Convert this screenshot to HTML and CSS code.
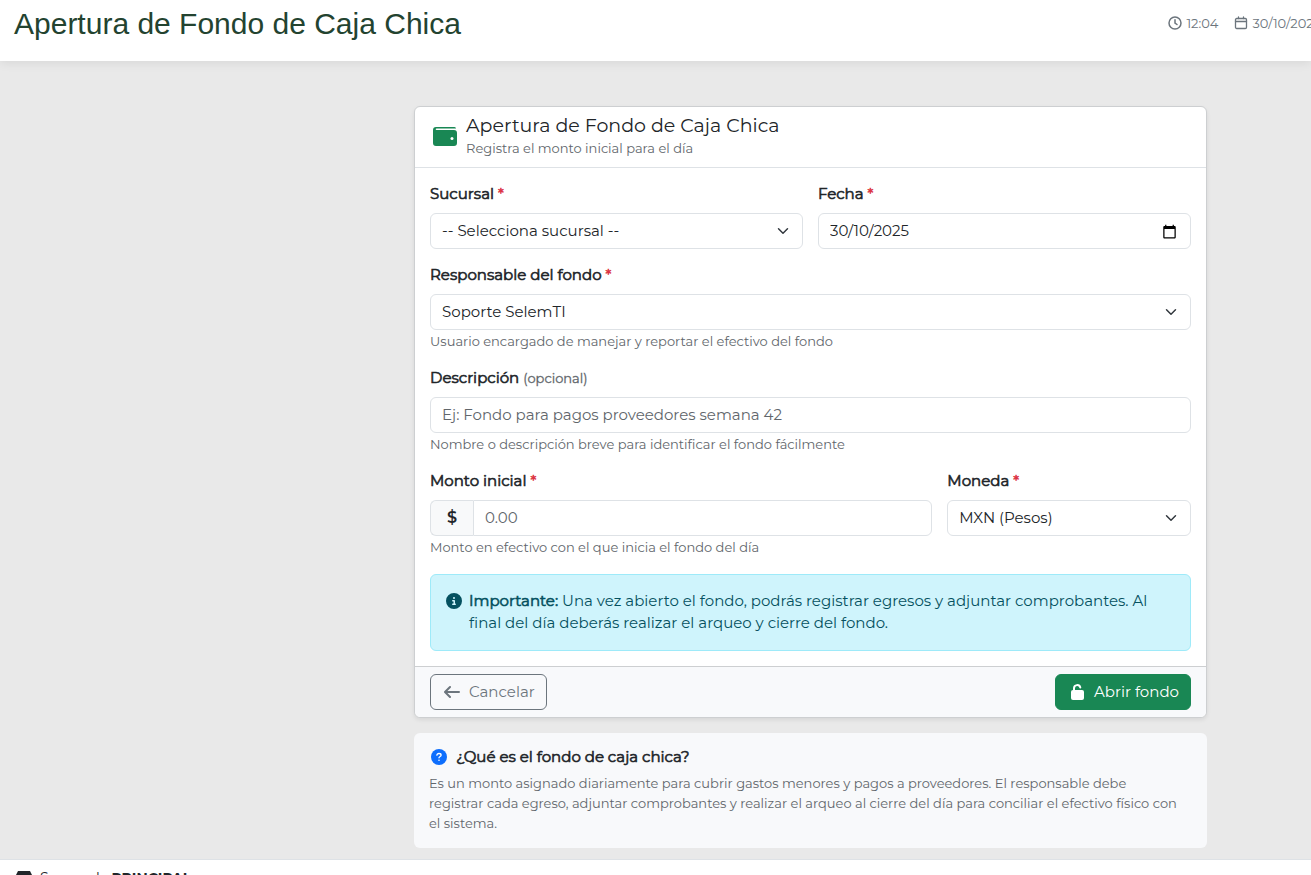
FILE: index.html
```html
<!DOCTYPE html>
<html lang="es">
<head>
<meta charset="utf-8">
<title>Apertura de Fondo de Caja Chica</title>
<link rel="stylesheet" href="styles.css">
</head>
<body>
<header class="topbar">
  <h1 class="topbar-title">Apertura de Fondo de Caja Chica</h1>
  <div class="topbar-meta">
    <span class="meta-item">
      <svg class="meta-icon" viewBox="0 0 14 14" fill="none" stroke="currentColor" stroke-linecap="round" aria-hidden="true"><circle cx="7" cy="7" r="6" stroke-width="1.500"/><path d="M7 3.800V7l2 1.500" stroke-width="1.500"/></svg>
      12:04</span>
    <span class="meta-item">
      <svg class="meta-icon" viewBox="0 0 14 14" fill="none" stroke="currentColor" stroke-linecap="round" aria-hidden="true"><rect x="1.500" y="2.500" width="11" height="10" rx="1.200" stroke-width="1.300"/><path d="M1.500 5.500h11M4.500 1v1.500M9.500 1v1.500" stroke-width="1.300"/></svg>
      30/10/2025</span>
  </div>
</header>

<main class="page">
  <div class="column">
    <form class="card">
      <div class="card-header">
        <svg class="wallet" viewBox="0 0 24 20" aria-hidden="true"><path d="M3 0h18.500q1.500 0 1.500 1.500H3.500a.8.8 0 0 0 0 1.600H21a3 3 0 0 1 3 3V16a3 3 0 0 1-3 3H3a3 3 0 0 1-3-3V3a3 3 0 0 1 3-3z" fill="currentColor"/><circle cx="19" cy="11.500" r="1.500" fill="#fff"/></svg>
        <div>
          <h2 class="card-title">Apertura de Fondo de Caja Chica</h2>
          <p class="card-subtitle">Registra el monto inicial para el día</p>
        </div>
      </div>

      <div class="card-body">
        <div class="field half">
          <label class="label" for="sucursal">Sucursal <span class="required">*</span></label>
          <select class="control select" id="sucursal"><option>-- Selecciona sucursal --</option></select>
        </div>
        <div class="field half">
          <label class="label" for="fecha">Fecha <span class="required">*</span></label>
          <div class="control date-control">
            <input class="bare-input" id="fecha" type="text" value="30/10/2025">
            <svg class="date-icon" viewBox="0 0 24 24" aria-hidden="true"><path d="M20 3h-1V1h-2v2H7V1H5v2H4c-1.100 0-2 .9-2 2v16c0 1.100.9 2 2 2h16c1.100 0 2-.9 2-2V5c0-1.100-.9-2-2-2zm0 18H4V8h16v13z"/></svg>
          </div>
        </div>
        <div class="field full">
          <label class="label" for="responsable">Responsable del fondo <span class="required">*</span></label>
          <select class="control select" id="responsable"><option>Soporte SelemTI</option></select>
          <p class="hint">Usuario encargado de manejar y reportar el efectivo del fondo</p>
        </div>
        <div class="field full">
          <label class="label" for="descripcion">Descripción <span class="optional">(opcional)</span></label>
          <input class="control text-input" id="descripcion" type="text" placeholder="Ej: Fondo para pagos proveedores semana 42">
          <p class="hint">Nombre o descripción breve para identificar el fondo fácilmente</p>
        </div>
        <div class="field amount">
          <label class="label" for="monto">Monto inicial <span class="required">*</span></label>
          <div class="input-group">
            <span class="prefix">$</span>
            <input class="control text-input" id="monto" type="text" placeholder="0.00">
          </div>
          <p class="hint">Monto en efectivo con el que inicia el fondo del día</p>
        </div>
        <div class="field currency">
          <label class="label" for="moneda">Moneda <span class="required">*</span></label>
          <select class="control select" id="moneda"><option>MXN (Pesos)</option></select>
        </div>
        <div class="alert full">
          <svg class="alert-icon" viewBox="0 0 512 512" fill="currentColor" aria-hidden="true"><path d="M256 512A256 256 0 1 0 256 0a256 256 0 1 0 0 512zM216 336h24v-64h-24c-13.300 0-24-10.700-24-24s10.700-24 24-24h48c13.300 0 24 10.700 24 24v88h8c13.300 0 24 10.700 24 24s-10.700 24-24 24h-80c-13.300 0-24-10.700-24-24s10.700-24 24-24zm40-208a32 32 0 1 1 0 64 32 32 0 1 1 0-64z"/></svg>
          <p class="alert-text"><strong>Importante:</strong> Una vez abierto el fondo, podrás registrar egresos y adjuntar comprobantes. Al final del día deberás realizar el arqueo y cierre del fondo.</p>
        </div>
      </div>

      <div class="card-footer">
        <button class="btn btn-outline" type="button">
          <svg class="arrow" viewBox="0 0 16 16" fill="none" stroke="currentColor" stroke-width="2" stroke-linecap="round" stroke-linejoin="round" aria-hidden="true"><path d="M15 8H1.500M6 3 1 8l5 5"/></svg>
          Cancelar</button>
        <button class="btn btn-primary" type="submit">
          <svg class="lock" viewBox="0 0 13 16" aria-hidden="true"><path d="M3 7V4.300a3.200 3.200 0 0 1 6.300-.8" fill="none" stroke="currentColor" stroke-width="2" stroke-linecap="round"/><rect y="6" width="13" height="10" rx="2" fill="currentColor"/></svg>
          Abrir fondo</button>
      </div>
    </form>

    <section class="help">
      <h3 class="help-title">
        <svg class="help-icon" viewBox="0 0 16 16" aria-hidden="true"><circle cx="8" cy="8" r="8" fill="#0d6efd"/><path d="M5.900 6.200c0-1.100.8-1.700 2.100-1.700s2.100.7 2.100 1.700c0 1.300-2.100 1.300-2.100 2.600" fill="none" stroke="#fff" stroke-width="1.300" stroke-linecap="round"/><circle cx="8" cy="11.300" r=".8" fill="#fff"/></svg>
        ¿Qué es el fondo de caja chica?</h3>
      <p class="help-text">Es un monto asignado diariamente para cubrir gastos menores y pagos a proveedores. El responsable debe registrar cada egreso, adjuntar comprobantes y realizar el arqueo al cierre del día para conciliar el efectivo físico con el sistema.</p>
    </section>
  </div>
</main>

<footer class="statusbar">
  <svg class="store" viewBox="0 0 16 14" fill="currentColor" aria-hidden="true"><path d="M2 0h12l2 4c0 2-2 3-3 2v8H3V6C2 7 0 6 0 4z"/></svg>
  <span>Sucursal: <strong class="branch">PRINCIPAL</strong></span>
</footer>
</body>
</html>
```
FILE: styles.css
```css
* {
  box-sizing: border-box;
}

body {
  margin: 0;
  height: 100vh;
  overflow: hidden;
  background: #e9e9e9;
  color: #212529;
  font: 400 15px/22px Montserrat, Inter, sans-serif;
}

h1, h2, h3, p {
  margin: 0;
}

svg {
  flex: none;
}

.topbar {
  display: flex;
  justify-content: space-between;
  align-items: flex-start;
  height: 61px;
  padding: 5px 0 0 14px;
  background: #fff;
  box-shadow: 0 2px 10px rgba(0, 0, 0, 0.08);
}

.topbar-title {
  font: 400 30px/38px "Liberation Sans", Arial, sans-serif;
  color: #234330;
}

.topbar-meta {
  display: flex;
  gap: 16px;
  margin-right: -10px;
  padding-top: 8px;
  font-size: 13px;
  line-height: 20px;
  color: #6c757d;
  white-space: nowrap;
}

.meta-item {
  display: flex;
  align-items: center;
  gap: 4px;
}

.meta-icon {
  width: 14px;
  height: 14px;
}

.page {
  display: grid;
  grid-template-columns: 414fr 793fr 104fr;
  padding: 45px 0 11px;
}

.column {
  grid-column: 2;
  display: grid;
  gap: 15px;
  min-width: 0;
}

.card {
  margin: 0;
  background: #fff;
  border: 1px solid #cdcfd1;
  border-radius: 6px;
  box-shadow: 0 2px 4px rgba(0, 0, 0, 0.08);
}

.card-header {
  display: flex;
  align-items: center;
  gap: 9px;
  padding: 8px 18px;
  border-bottom: 1px solid #dee2e6;
}

.wallet {
  width: 24px;
  height: 20px;
  color: #198754;
}

.card-title {
  font-size: 19px;
  line-height: 22px;
  font-weight: 400;
}

.card-subtitle {
  line-height: 22px;
}

.card-subtitle,
.hint,
.help-text {
  font-size: 13px;
  color: #61666b;
}

.card-body {
  display: grid;
  grid-template-columns: repeat(12, minmax(0, 1fr));
  gap: 15px;
  padding: 15px;
}

.half {
  grid-column: span 6;
}

.full {
  grid-column: span 12;
}

.amount {
  grid-column: span 8;
}

.currency {
  grid-column: span 4;
}

.label {
  display: block;
  margin-bottom: 8px;
}

.label,
.help-title,
.alert strong {
  font-weight: 400;
  -webkit-text-stroke: 0.6px;
}

.required {
  color: #dc3545;
}

.optional {
  font-size: 13px;
  color: #61666b;
  -webkit-text-stroke: 0.3px;
}

.control {
  display: block;
  width: 100%;
  height: 36px;
  margin: 0;
  padding: 0 11px;
  border: 1px solid #dee2e6;
  border-radius: 6px;
  background: #fff;
  color: #212529;
  font: inherit;
}

.text-input {
  padding-bottom: 2px;
}

.control::placeholder {
  color: #61666b;
  opacity: 1;
}

.select {
  appearance: none;
  background: #fff url("data:image/svg+xml,%3Csvg xmlns='http://www.w3.org/2000/svg' viewBox='0 0 16 16'%3E%3Cpath fill='none' stroke='%23343a40' stroke-linecap='round' stroke-linejoin='round' stroke-width='2' d='m2 5 6 6 6-6'/%3E%3C/svg%3E") no-repeat right 13px center / 12px 12px;
}

.date-control {
  display: flex;
  align-items: center;
  padding-right: 13px;
}

.bare-input {
  flex: 1;
  min-width: 0;
  padding: 0;
  border: 0;
  background: none;
  color: inherit;
  font: inherit;
}

.date-icon {
  width: 15px;
  height: 15px;
}

.hint {
  margin: 1px 0;
  line-height: 20px;
}

.input-group {
  display: flex;
}

.prefix {
  display: flex;
  align-items: center;
  justify-content: center;
  width: 43px;
  border: 1px solid #dee2e6;
  border-right: 0;
  border-radius: 6px 0 0 6px;
  background: #f8f9fa;
  font-size: 16px;
  font-weight: 600;
}

.input-group .control {
  flex: 1;
  min-width: 0;
  border-radius: 0 6px 6px 0;
}

.alert {
  display: flex;
  gap: 7px;
  margin-top: 1px;
  padding: 15px 15px 16px;
  border: 1px solid #9eeaf9;
  border-radius: 6px;
  background: #cff4fc;
  color: #055160;
}

.alert-icon {
  width: 16px;
  height: 16px;
  margin-top: 3px;
}

.card-footer {
  display: flex;
  justify-content: space-between;
  padding: 7px 15px;
  border-top: 1px solid #cdcfd1;
  border-radius: 0 0 6px 6px;
  background: #f8f9fb;
}

.btn {
  display: flex;
  align-items: center;
  height: 36px;
  padding: 0 11px 0 13px;
  border: 1px solid;
  border-radius: 6px;
  font: inherit;
}

.btn-outline {
  gap: 9px;
  border-color: #6c757d;
  background: transparent;
  color: #6c757d;
}

.btn-primary {
  gap: 10px;
  padding-left: 15px;
  border-color: #198754;
  background: #198754;
  color: #fff;
}

.arrow {
  width: 16px;
  height: 16px;
}

.lock {
  width: 13px;
  height: 16px;
}

.help {
  padding: 15px 25px 15px 15px;
  border-radius: 6px;
  background: #f8f9fb;
}

.help-title {
  display: flex;
  align-items: center;
  gap: 9px;
  margin-bottom: 7px;
  padding-left: 2px;
  font-size: 15px;
  line-height: 18px;
}

.help-icon {
  width: 16px;
  height: 16px;
}

.help-text {
  line-height: 20px;
}

.statusbar {
  display: flex;
  align-items: center;
  gap: 8px;
  height: 36px;
  padding: 0 16px;
  border-top: 1px solid #dee2e6;
  background: #fff;
  font-size: 14px;
}

.branch {
  margin-left: 5px;
}

.store {
  width: 16px;
  height: 14px;
}
```
